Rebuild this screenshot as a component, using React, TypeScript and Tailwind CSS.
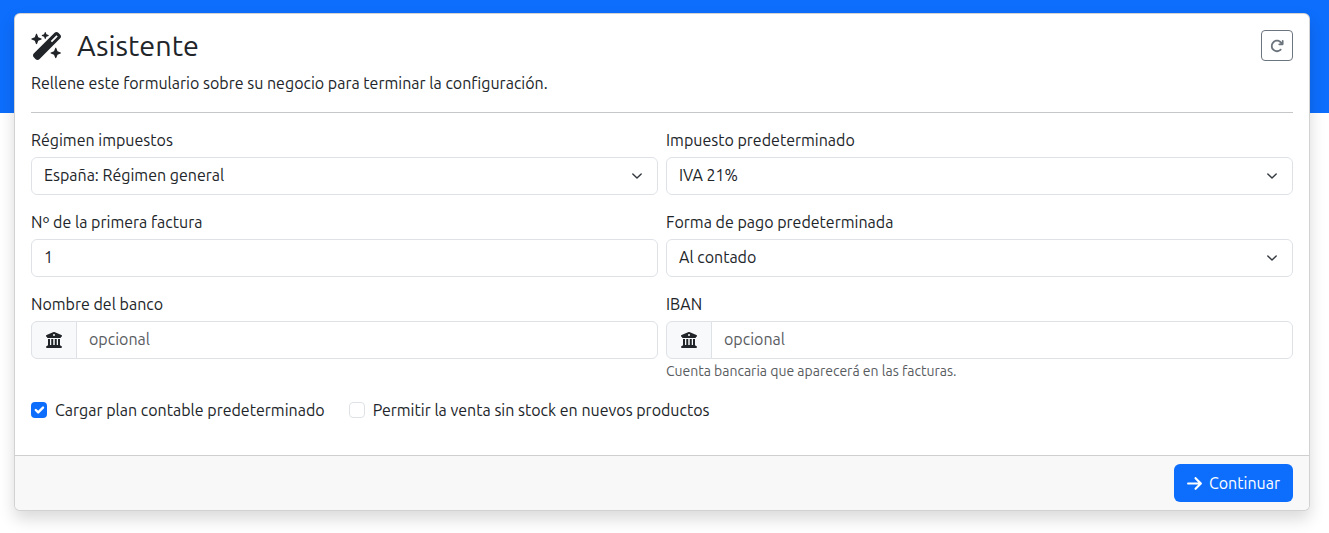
import React from "react";
import { FaWandMagicSparkles, FaArrowRotateRight, FaBuildingColumns, FaArrowRight } from "react-icons/fa6";

function Label({ children }: { children: React.ReactNode }) {
  return <label className="block mb-[5px] h-6 leading-6 text-[16px] text-[#212529]">{children}</label>;
}

function SelectBox({ value }: { value: string }) {
  return (
    <div className="h-[38px] border border-[#dee2e6] rounded-md bg-white pl-3 pr-3 flex items-center justify-between text-[#212529]">
      <span className="-mt-[2px]">{value}</span>
      <svg width="16" height="16" viewBox="0 0 16 16" fill="none" stroke="#343a40" strokeWidth="2" strokeLinecap="round" strokeLinejoin="round"><path d="m2 5 6 6 6-6" transform="translate(2.4 2.4) scale(0.7)" /></svg>
    </div>
  );
}

function BankInput() {
  return (
    <div className="flex h-[38px]">
      <div className="w-[46px] shrink-0 bg-[#f8f9fa] border border-[#dee2e6] rounded-l-md flex items-center justify-center text-[#212529]">
        <FaBuildingColumns className="w-4 h-4" />
      </div>
      <div className="flex-1 -ml-px border border-[#dee2e6] rounded-r-md bg-white pl-3 flex items-center text-[#595c5f]">
        <span className="-mt-[2px]">opcional</span>
      </div>
    </div>
  );
}

export default function App() {
  return (
    <div className="min-h-[533px] bg-white text-[16px] leading-6 text-[#212529] font-['Ubuntu','Noto_Sans',sans-serif] overflow-hidden">
      <div className="h-[113px] bg-[#0d6efd]" />
      <div className="-mt-[100px] ml-[14px] mr-[19px] h-[498px] bg-white border border-[rgba(0,0,0,0.175)] rounded-md shadow-[0_8px_16px_rgba(0,0,0,0.15)] flex flex-col overflow-hidden">
        <div className="flex-1 px-4 pt-4">
          <div className="flex justify-between items-start">
            <div>
              <h1 className="flex items-center h-[33px] text-[28.8px] leading-[33px] font-normal -mt-px">
                <FaWandMagicSparkles className="w-[32px] h-[28px] mr-[14px] mt-px" />
                Asistente
              </h1>
              <p className="mt-[9px]">Rellene este formulario sobre su negocio para terminar la configuración.</p>
            </div>
            <button className="w-[32px] h-[31px] border border-[#6c757d] rounded flex items-center justify-center text-[#6c757d]">
              <FaArrowRotateRight className="w-[14px] h-[14px]" />
            </button>
          </div>
          <hr className="mt-[17px] border-t border-[#c6c7c8]" />
          <div className="grid grid-cols-2 gap-x-2 mt-[15px]">
            <div className="mb-[15px]"><Label>Régimen impuestos</Label><SelectBox value="España: Régimen general" /></div>
            <div className="mb-[15px]"><Label>Impuesto predeterminado</Label><SelectBox value="IVA 21%" /></div>
            <div className="mb-[15px]">
              <Label>Nº de la primera factura</Label>
              <div className="h-[38px] border border-[#dee2e6] rounded-md bg-white pl-3 flex items-center"><span className="-mt-[2px]">1</span></div>
            </div>
            <div className="mb-[15px]"><Label>Forma de pago predeterminada</Label><SelectBox value="Al contado" /></div>
            <div><Label>Nombre del banco</Label><BankInput /></div>
            <div>
              <Label>IBAN</Label>
              <BankInput />
              <div className="mt-[2px] text-[14px] leading-[21px] text-[#595c5f]">Cuenta bancaria que aparecerá en las facturas.</div>
            </div>
          </div>
          <div className="flex items-center mt-4 h-6">
            <span className="w-4 h-4 rounded bg-[#0d6efd] flex items-center justify-center mr-2">
              <svg width="16" height="16" viewBox="0 0 20 20" fill="none" stroke="#fff" strokeWidth="3" strokeLinecap="round" strokeLinejoin="round"><path d="m6 10 3 3 6-6" /></svg>
            </span>
            <span>Cargar plan contable predeterminado</span>
            <span className="w-4 h-4 rounded border border-[#dee2e6] bg-white ml-6 mr-2" />
            <span>Permitir la venta sin stock en nuevos productos</span>
          </div>
        </div>
        <div className="h-[55px] bg-[#f8f8f8] border-t border-[#cfcfcf] flex items-center justify-end px-4">
          <button className="h-[38px] px-[13px] rounded-md bg-[#0d6efd] text-white flex items-center gap-[7px]">
            <FaArrowRight className="w-[15px] h-[17px]" />
            Continuar
          </button>
        </div>
      </div>
    </div>
  );
}
